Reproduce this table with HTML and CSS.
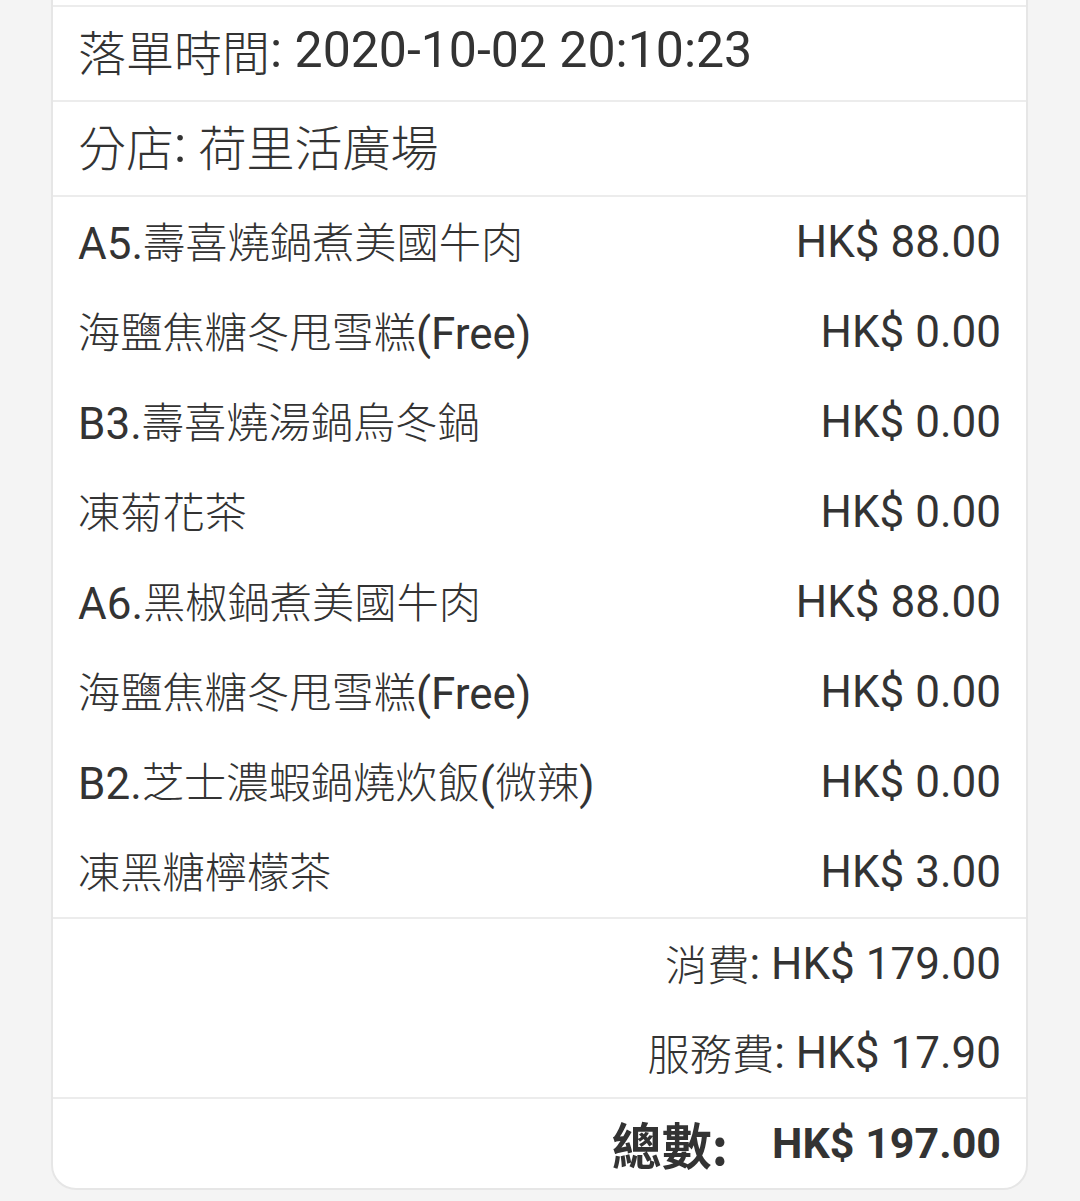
FILE: index.html
```html
<!DOCTYPE html>
<html lang="zh-Hant">
<head>
<meta charset="utf-8">
<link rel="stylesheet" href="styles.css">
</head>
<body>
<div class="card">
  <div class="spacer"></div>
  <div class="info"><span class="cj">落單時間</span>: 2020-10-02 20:10:23</div>
  <div class="info"><span class="cj">分店</span>: <span class="cj">荷里活廣場</span></div>
  <div class="items">
    <div class="item"><span>A5.<span class="cj">壽喜燒鍋煮美國牛肉</span></span><span>HK$ 88.00</span></div>
    <div class="item"><span><span class="cj">海鹽焦糖冬甩雪糕</span>(Free)</span><span>HK$ 0.00</span></div>
    <div class="item"><span>B3.<span class="cj">壽喜燒湯鍋烏冬鍋</span></span><span>HK$ 0.00</span></div>
    <div class="item"><span><span class="cj">凍菊花茶</span></span><span>HK$ 0.00</span></div>
    <div class="item"><span>A6.<span class="cj">黑椒鍋煮美國牛肉</span></span><span>HK$ 88.00</span></div>
    <div class="item"><span><span class="cj">海鹽焦糖冬甩雪糕</span>(Free)</span><span>HK$ 0.00</span></div>
    <div class="item"><span>B2.<span class="cj">芝士濃蝦鍋燒炊飯</span>(<span class="cj">微辣</span>)</span><span>HK$ 0.00</span></div>
    <div class="item"><span><span class="cj">凍黑糖檸檬茶</span></span><span>HK$ 3.00</span></div>
  </div>
  <div class="sums">
    <div class="sum"><span class="cj">消費</span>: HK$ 179.00</div>
    <div class="sum"><span class="cj">服務費</span>: HK$ 17.90</div>
  </div>
  <div class="total"><span class="total-label">總數:</span><span class="total-amount">HK$ 197.00</span></div>
</div>
</body>
</html>
```

FILE: styles.css
```css
html, body {
  margin: 0;
  padding: 0;
  background: #f4f4f4;
}
body {
  font-family: Roboto, "Noto Sans CJK TC", sans-serif;
  color: #333333;
  font-size: 44px;
  line-height: 1;
}
.cj {
  font-family: "Noto Sans CJK TC", sans-serif;
  font-size: 0.96em;
  font-weight: 300;
  vertical-align: 1px;
}
.card {
  box-sizing: border-box;
  width: 977px;
  margin: -10px 0 0 51px;
  background: #ffffff;
  border: 2px solid #e6e6e6;
  border-radius: 0 0 25px 25px;
}
.spacer {
  height: 13px;
  border-bottom: 2px solid #ececec;
}
.info {
  height: 86px;
  display: flex;
  align-items: center;
  padding: 0 25px 7px;
  font-size: 50px;
  white-space: pre;
  border-bottom: 2px solid #ececec;
}
.items {
  border-bottom: 2px solid #ececec;
}
.item {
  height: 90px;
  display: flex;
  align-items: center;
  justify-content: space-between;
  padding: 0 25px;
}
.sums {
  border-bottom: 2px solid #ececec;
}
.sum {
  height: 89px;
  display: flex;
  align-items: center;
  justify-content: flex-end;
  padding: 0 25px;
  white-space: pre;
}
.total {
  height: 89px;
  display: flex;
  align-items: center;
  justify-content: flex-end;
  padding: 0 25px;
  font-weight: bold;
}
.total-label {
  font-family: "Noto Sans CJK TC", sans-serif;
  font-size: 50px;
  position: relative;
  top: -1px;
}
.total-amount {
  font-size: 43px;
  margin-left: 44px;
}
```
